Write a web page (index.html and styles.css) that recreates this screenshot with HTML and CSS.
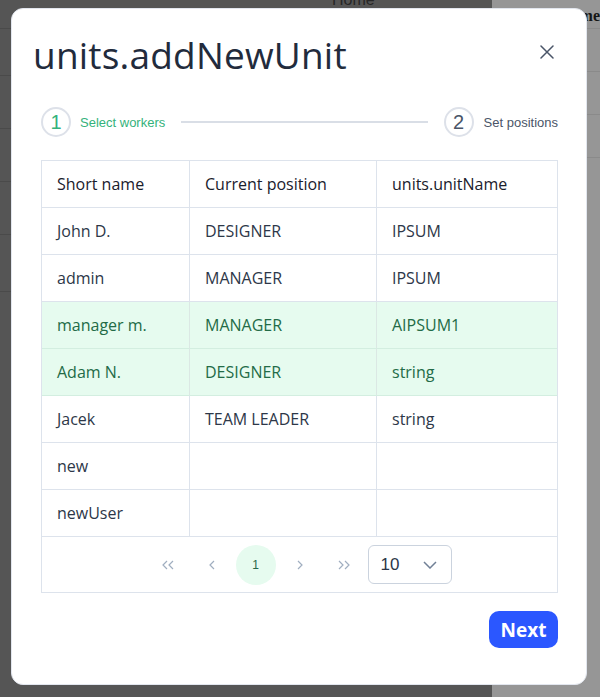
FILE: index.html
```html
<!DOCTYPE html>
<html>
<head>
<meta charset="utf-8">
<link rel="stylesheet" href="styles.css">
</head>
<body>
<div class="page">
  <div class="page-main">
    <div class="page-home">Home</div>
    <div class="page-row short"></div>
    <div class="page-row"></div>
    <div class="page-row"></div>
    <div class="page-row"></div>
    <div class="page-row tall"></div>
  </div>
  <div class="page-side">
    <div class="side-head">Name</div>
    <div class="side-row"></div>
    <div class="side-row"></div>
    <div class="side-row"></div>
  </div>
</div>

<div class="modal">
  <header class="modal-header">
    <h1 class="modal-title">units.addNewUnit</h1>
    <button class="close-btn" aria-label="Close">
      <svg width="14" height="14" viewBox="0 0 14 14"><path d="M1 1 L13 13 M13 1 L1 13" stroke="#4a5568" stroke-width="1.5" fill="none" stroke-linecap="round"/></svg>
    </button>
  </header>

  <div class="modal-body">
    <div class="stepper">
      <div class="step active">
        <span class="step-circle">1</span>
        <span class="step-label">Select workers</span>
      </div>
      <div class="step-line"></div>
      <div class="step">
        <span class="step-circle">2</span>
        <span class="step-label">Set positions</span>
      </div>
    </div>

    <div class="table-wrap">
      <table class="grid">
        <colgroup>
          <col class="c1"><col class="c2"><col class="c3">
        </colgroup>
        <thead>
          <tr><th>Short name</th><th>Current position</th><th>units.unitName</th></tr>
        </thead>
        <tbody>
          <tr><td>John D.</td><td>DESIGNER</td><td>IPSUM</td></tr>
          <tr><td>admin</td><td>MANAGER</td><td>IPSUM</td></tr>
          <tr class="selected"><td>manager m.</td><td>MANAGER</td><td>AIPSUM1</td></tr>
          <tr class="selected"><td>Adam N.</td><td>DESIGNER</td><td>string</td></tr>
          <tr><td>Jacek</td><td>TEAM LEADER</td><td>string</td></tr>
          <tr><td>new</td><td></td><td></td></tr>
          <tr><td>newUser</td><td></td><td></td></tr>
        </tbody>
      </table>
      <div class="pager">
        <button class="pg-btn" aria-label="First">
          <svg width="14" height="10" viewBox="0 0 14 10"><path d="M6 1 L2 5 L6 9 M12 1 L8 5 L12 9" stroke="#a0aec0" stroke-width="1.2" fill="none"/></svg>
        </button>
        <button class="pg-btn" aria-label="Previous">
          <svg width="8" height="10" viewBox="0 0 8 10"><path d="M6 1 L2 5 L6 9" stroke="#a0aec0" stroke-width="1.2" fill="none"/></svg>
        </button>
        <button class="pg-btn current">1</button>
        <button class="pg-btn" aria-label="Next page">
          <svg width="8" height="10" viewBox="0 0 8 10"><path d="M2 1 L6 5 L2 9" stroke="#a0aec0" stroke-width="1.2" fill="none"/></svg>
        </button>
        <button class="pg-btn" aria-label="Last">
          <svg width="14" height="10" viewBox="0 0 14 10"><path d="M2 1 L6 5 L2 9 M8 1 L12 5 L8 9" stroke="#a0aec0" stroke-width="1.2" fill="none"/></svg>
        </button>
        <div class="page-size">
          <span>10</span>
          <svg width="14" height="8" viewBox="0 0 14 8"><path d="M1 1 L7 7 L13 1" stroke="#718096" stroke-width="1.5" fill="none"/></svg>
        </div>
      </div>
    </div>

    <div class="modal-footer">
      <button class="next-btn">Next</button>
    </div>
  </div>
</div>
</body>
</html>
```

FILE: styles.css
```css
* { box-sizing: border-box; }

html, body {
  margin: 0;
  padding: 0;
  width: 600px;
  height: 697px;
  overflow: hidden;
}

body {
  font-family: "Open Sans", "Noto Sans", sans-serif;
  position: relative;
  background: #545454;
}

/* underlying page (dimmed by overlay) */
.page {
  display: flex;
  height: 697px;
}

.page-main {
  flex: 1;
  background: #555555;
}

.page-home {
  height: 29px;
  border-bottom: 1px solid #4a4a4a;
  padding-left: 332px;
  font-family: "Liberation Sans", Arial, sans-serif;
  font-size: 16px;
  line-height: 18px;
  color: #262626;
  overflow: hidden;
}

.page-home::before { content: ""; display: block; margin-top: -9px; }

.page-row {
  height: 53px;
  border-bottom: 1px solid #4a4a4a;
}
.page-row.short { height: 47px; }
.page-row.tall { height: 57px; }

.page-side {
  width: 108px;
  background: #969696;
}

.side-head {
  height: 29px;
  border-bottom: 1px solid #8a8a8a;
  padding-left: 68px;
  font-family: "Liberation Serif", "Times New Roman", serif;
  font-weight: bold;
  font-size: 16px;
  line-height: 20px;
  padding-top: 6px;
  color: #151515;
  white-space: nowrap;
}

.side-row {
  height: 43px;
  border-bottom: 1px solid #8a8a8a;
}

/* modal */
.modal {
  position: absolute;
  left: 11px;
  top: 8px;
  width: 576px;
  height: 677px;
  background: #ffffff;
  border: 1px solid #e2e6ee;
  border-radius: 12px;
}

.modal-header {
  display: flex;
  justify-content: space-between;
  align-items: flex-start;
  padding: 23px 27px 0 21px;
}

.modal-title {
  margin: 0;
  font-size: 37px;
  line-height: 45px;
  font-weight: 500;
  color: #222b3c;
  letter-spacing: 0.2px;
}

.close-btn {
  width: 24px;
  height: 24px;
  margin-top: 8px;
  padding: 0;
  border: 0;
  background: transparent;
  display: flex;
  align-items: center;
  justify-content: center;
}

.modal-body {
  padding: 0 28px 0 29px;
}

/* stepper */
.stepper {
  display: flex;
  align-items: center;
  margin-top: 30px;
  height: 30px;
  font-family: "Liberation Sans", Arial, sans-serif;
}

.step {
  display: flex;
  align-items: center;
  gap: 10px;
}

.step-circle {
  width: 30px;
  height: 30px;
  border: 2px solid #dde1e9;
  border-radius: 50%;
  display: flex;
  align-items: center;
  justify-content: center;
  font-size: 20px;
  color: #4a5568;
}

.step-label {
  font-size: 13px;
  color: #4a5568;
}

.step.active .step-circle { color: #34b27b; }
.step.active .step-label { color: #34b27b; margin-left: -1px; }

.step-line {
  flex: 1;
  height: 2px;
  background: #d9dee6;
  margin: 0 16px;
}

/* table */
.table-wrap {
  margin-top: 23px;
  border: 1px solid #dde3ec;
}

.grid {
  width: 100%;
  border-collapse: separate;
  border-spacing: 0;
  table-layout: fixed;
}

.grid col.c1 { width: 148px; }
.grid col.c2 { width: 187px; }

.grid th,
.grid td {
  height: 47px;
  padding: 0 15px;
  border-bottom: 1px solid #dde3ec;
  border-right: 1px solid #dde3ec;
  text-align: left;
  vertical-align: middle;
  font-size: 16px;
  white-space: nowrap;
}

.grid th:last-child,
.grid td:last-child { border-right: 0; }

.grid th {
  font-weight: 500;
  color: #1a202c;
}

.grid td {
  font-weight: 400;
  color: #2d3748;
}

.grid tr.selected td {
  background: #e6fbef;
  color: #236b47;
  border-bottom-color: #d3eee0;
  border-right-color: #dbe8e4;
}

/* pager */
.pager {
  height: 55px;
  display: flex;
  align-items: center;
  justify-content: center;
  gap: 4px;
}

.pg-btn {
  width: 40px;
  height: 40px;
  padding: 0;
  border: 0;
  border-radius: 50%;
  background: transparent;
  display: flex;
  align-items: center;
  justify-content: center;
  font-family: "Liberation Sans", Arial, sans-serif;
  font-size: 12px;
}

.pg-btn.current {
  background: #e6fbef;
  color: #276749;
}

.page-size {
  width: 84px;
  height: 39px;
  border: 1px solid #cbd3de;
  border-radius: 6px;
  display: flex;
  align-items: center;
  justify-content: space-between;
  padding: 0 14px 0 12px;
  font-family: "Liberation Sans", Arial, sans-serif;
  font-size: 17px;
  color: #2d3748;
}

/* footer */
.modal-footer {
  display: flex;
  justify-content: flex-end;
  margin-top: 18px;
}

.next-btn {
  width: 69px;
  height: 37px;
  border: 0;
  border-radius: 10px;
  background: #2b57ff;
  color: #ffffff;
  font-family: "Open Sans", "Noto Sans", sans-serif;
  font-weight: 700;
  font-size: 19px;
  padding: 0;
}
```
